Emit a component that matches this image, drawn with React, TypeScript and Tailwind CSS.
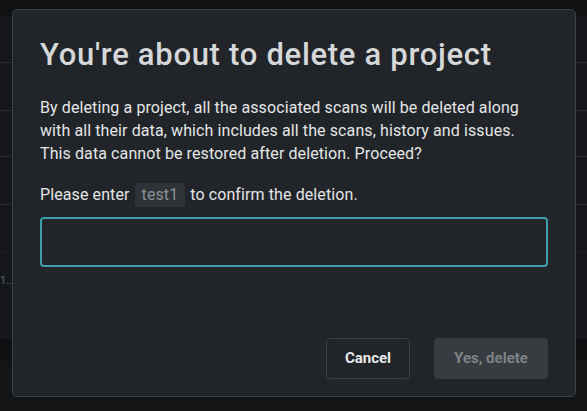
import React from "react";

const font = { fontFamily: "Roboto, 'Noto Sans', sans-serif" };

export default function App() {
  return (
    <div className="relative w-[587px] h-[411px] overflow-hidden bg-[#15171a]" style={font}>
      {/* background page */}
      <div className="flex flex-col h-full">
        <div className="h-[16px] bg-[#0f1113]" />
        <div className="h-[47px] border-b border-[#2a2d31]" />
        <div className="h-[48px] border-b border-[#2a2d31]" />
        <div className="h-[46px] border-b border-[#2a2d31]" />
        <div className="h-[48px] border-b border-[#2a2d31]" />
        <div className="h-[48px] border-b border-[#1c1f22]" />
        <div className="h-[86px] flex items-start pt-[20px] text-[11px] text-[#5f646a]">1..</div>
        <div className="h-[22px] bg-[#0e1012]" />
        <div className="flex-1 bg-[#131517]" />
      </div>

      {/* modal */}
      <div className="absolute left-[12px] top-[9px] w-[564px] h-[388px] rounded-[5px] border border-[#3b4045] bg-[#212529] flex flex-col px-[27px] pt-[26px] pb-[17px]">
        <h1 className="text-[31px] leading-[38px] font-medium text-[#d5d7d9] whitespace-nowrap tracking-[0.7px]">
          You're about to delete a project
        </h1>
        <p className="mt-[22px] text-[16px] leading-[23px] text-[#e4e5e6] whitespace-nowrap tracking-[0.1px]">
          By deleting a project, all the associated scans will be deleted along
          <br />
          with all their data, which includes all the scans, history and issues.
          <br />
          This data cannot be restored after deletion. Proceed?
        </p>
        <p className="mt-[18px] text-[16px] leading-[24px] text-[#e4e5e6] flex items-center tracking-[0.1px]">
          Please enter
          <span className="mx-[5px] px-[7px] h-[24px] leading-[24px] rounded-[4px] bg-[#2e3337] text-[#8b9196]">test1</span>
          to confirm the deletion.
        </p>
        <div className="mt-[10px] h-[50px] w-[508px] rounded-[4px] border-2 border-[#3e9ead] bg-[#212529]" />
        <div className="flex-1" />
        <div className="flex justify-end gap-[24px]">
          <button className="h-[41px] w-[84px] rounded-[4px] border border-[#3b4045] bg-[#212529] text-[15px] font-bold text-[#e9eaeb]">
            Cancel
          </button>
          <button className="h-[41px] w-[114px] rounded-[4px] bg-[#383c40] text-[15px] font-bold text-[#7e8286]">
            Yes, delete
          </button>
        </div>
      </div>
    </div>
  );
}
